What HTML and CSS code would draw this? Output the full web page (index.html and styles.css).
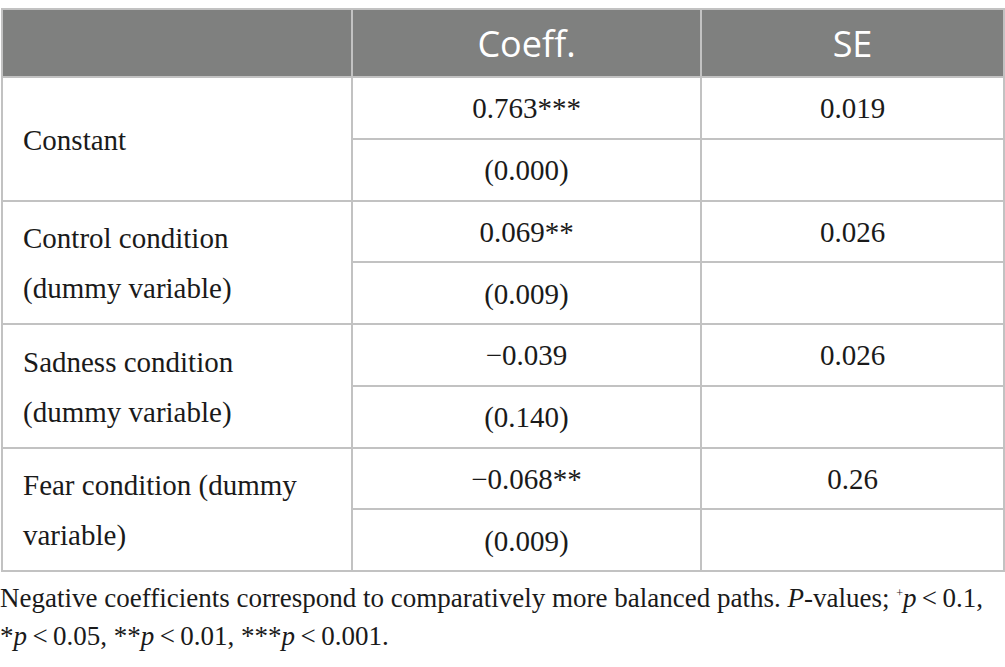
FILE: index.html
```html
<!DOCTYPE html>
<html lang="en">
<head>
  <meta charset="UTF-8">
  <title>Regression table</title>
  <link rel="stylesheet" href="styles.css">
</head>
<body>
  <table class="results">
    <thead>
      <tr>
        <th class="label-col"></th>
        <th class="coef-col">Coeff.</th>
        <th class="se-col">SE</th>
      </tr>
    </thead>
    <tbody>
      <tr>
        <td class="label" rowspan="2">Constant</td>
        <td>0.763***</td>
        <td>0.019</td>
      </tr>
      <tr>
        <td>(0.000)</td>
        <td></td>
      </tr>
      <tr>
        <td class="label" rowspan="2">Control condition<br>(dummy variable)</td>
        <td>0.069**</td>
        <td>0.026</td>
      </tr>
      <tr>
        <td>(0.009)</td>
        <td></td>
      </tr>
      <tr>
        <td class="label" rowspan="2">Sadness condition<br>(dummy variable)</td>
        <td>&minus;0.039</td>
        <td>0.026</td>
      </tr>
      <tr>
        <td>(0.140)</td>
        <td></td>
      </tr>
      <tr>
        <td class="label" rowspan="2">Fear condition (dummy<br>variable)</td>
        <td>&minus;0.068**</td>
        <td>0.26</td>
      </tr>
      <tr>
        <td>(0.009)</td>
        <td></td>
      </tr>
    </tbody>
  </table>
  <p class="note">Negative coefficients correspond to comparatively more balanced paths. <i>P</i>-values; <sup>+</sup><i>p</i>&thinsp;&lt;&thinsp;0.1,<br>*<i>p</i>&thinsp;&lt;&thinsp;0.05, **<i>p</i>&thinsp;&lt;&thinsp;0.01, ***<i>p</i>&thinsp;&lt;&thinsp;0.001.</p>
</body>
</html>
```

FILE: styles.css
```css
body {
  margin: 0;
  padding-top: 8px;
  font-family: "Liberation Serif", "Times New Roman", serif;
  color: #1a1a1a;
  background-color: #fff;
}
.results {
  width: 1004px;
  border-collapse: collapse;
  table-layout: fixed;
  margin-left: 1px;
}
.results th,
.results td {
  border: 2px solid #c2c2c2;
  padding: 0 6px;
}
.results th {
  height: 66px;
  background-color: #7f807f;
  color: #fff;
  font-family: "Open Sans", "Liberation Sans", sans-serif;
  font-weight: 400;
  font-size: 36px;
  text-align: center;
}
.label-col {
  width: 336px;
}
.coef-col {
  width: 335px;
}
.results td {
  height: 57.75px;
  padding-top: 2px;
  font-size: 29px;
  text-align: center;
  vertical-align: middle;
}
.results td.label {
  text-align: left;
  padding-left: 20px;
  line-height: 50px;
}
.note {
  margin: 2px 0 0;
  font-size: 27px;
  line-height: 38px;
}
.note sup {
  font-size: 12px;
  vertical-align: 10px;
}
```
